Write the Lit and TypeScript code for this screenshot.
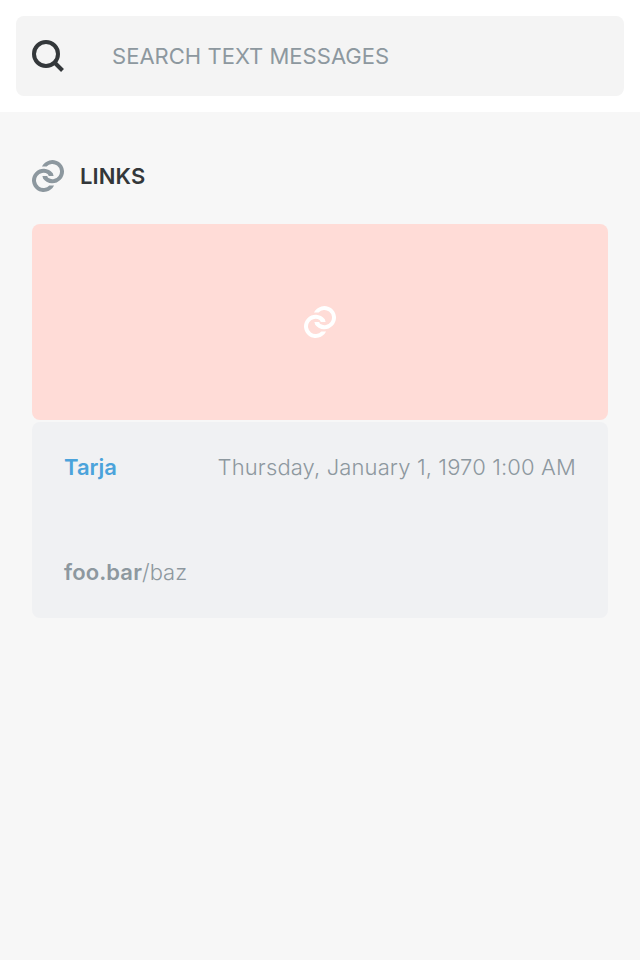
import { LitElement, html, css } from "lit";
import { customElement } from "lit/decorators.js";

const linkIcon = html`<svg class="icon" width="32" height="32" viewBox="0 0 32 32" fill="currentColor">
  <path d="M9.93 6.6A11.6 11.6 0 1 1 11.2 18.7L10.4 16H15.2Q15.6 17.3 16.4 18.06A7.6 7.6 0 1 0 14.67 6.6Z" />
  <path d="M22.07 25.4A11.6 11.6 0 1 1 20.8 13.3L21.6 16H16.8Q16.4 14.7 15.6 13.94A7.6 7.6 0 1 0 17.33 25.4Z" />
</svg>`;

@customElement("app-root")
export class AppRoot extends LitElement {
  static styles = css`
    :host { display: block; height: 960px; background: #f7f7f7; font-family: Inter, sans-serif; font-size: 22px; color: #33373a; }
    * { box-sizing: border-box; }
    .icon { display: block; flex: none; }
    .top { background: #fff; padding: 16px; height: 112px; }
    .search { height: 80px; border-radius: 8px; background: #f4f4f4; display: flex; align-items: center; padding: 0 16px; gap: 48px; }
    .placeholder { color: #8d989f; letter-spacing: 0.02px; }
    .section { padding: 48px 32px; }
    .heading { display: flex; align-items: center; gap: 16px; height: 32px; margin-bottom: 32px; font-weight: 600; letter-spacing: 0.1px; }
    .heading .icon { color: #8d989f; }
    .preview { height: 196px; border-radius: 8px; background: #ffdcd7; display: flex; align-items: center; justify-content: center; color: #fff; }
    .details { height: 196px; margin-top: 2px; border-radius: 8px; background: #f0f1f3; padding: 32px; display: flex; flex-direction: column; justify-content: space-between; color: #8d989f; font-weight: 300; line-height: 27px; }
    .row { display: flex; justify-content: space-between; }
    .name { color: #4ba3db; font-weight: 600; }
    .date { letter-spacing: 0.13px; }
    .host { font-weight: 600; letter-spacing: 0.12px; }
  `;
  render() {
    return html`
      <div class="top"><div class="search">
        <svg class="icon" width="32" height="32" viewBox="0 0 32 32" fill="none" stroke="currentColor" stroke-width="4"><circle cx="14" cy="14" r="12" /><path d="M22 22L30.5 30.5" /></svg>
        <span class="placeholder">SEARCH TEXT MESSAGES</span>
      </div></div>
      <div class="section">
        <div class="heading">${linkIcon}<span>LINKS</span></div>
        <div class="preview">${linkIcon}</div>
        <div class="details">
          <div class="row"><span class="name">Tarja</span><span class="date">Thursday, January 1, 1970 1:00 AM</span></div>
          <div class="url"><span class="host">foo.bar</span>/baz</div>
        </div>
      </div>`;
  }
}
